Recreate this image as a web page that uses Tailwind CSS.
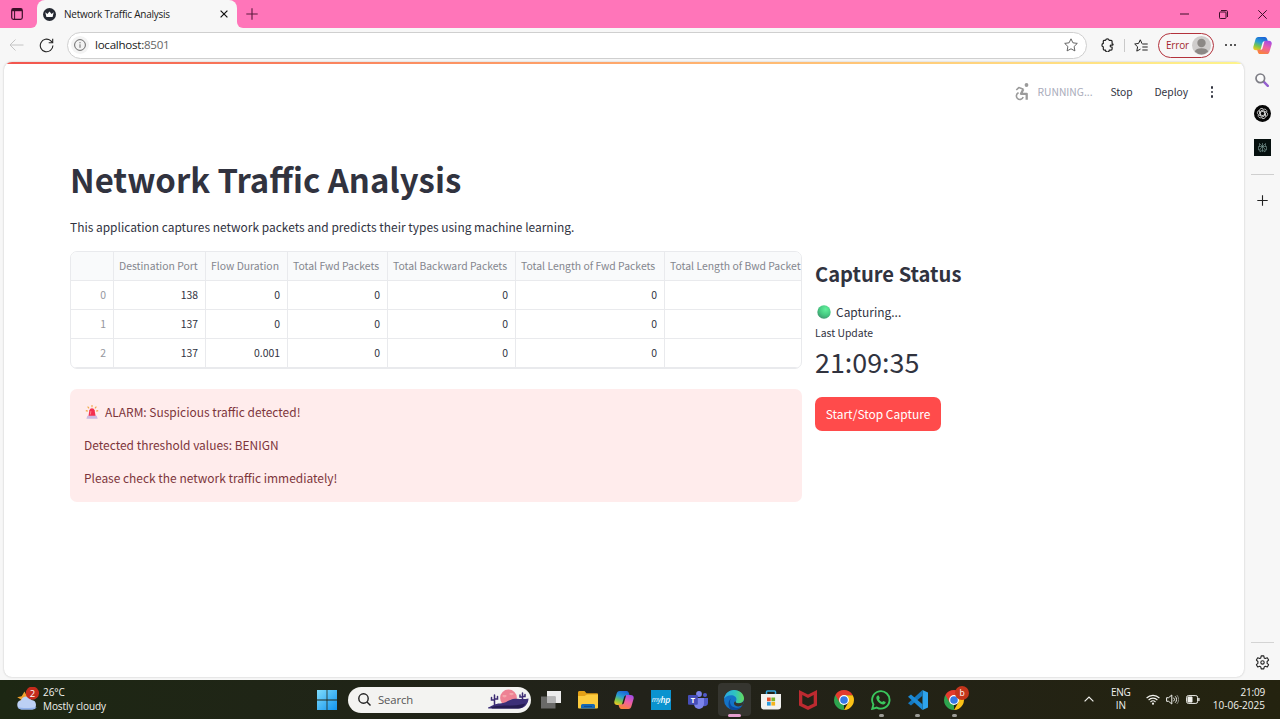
<!DOCTYPE html>
<html lang="en">
<head>
<meta charset="utf-8">
<title>Network Traffic Analysis</title>
<script src="https://cdn.jsdelivr.net/npm/@tailwindcss/browser@4"></script>
</head>
<body class="w-[1280px] h-[719px] overflow-hidden bg-[#f7f7f7] font-['Noto_Sans',sans-serif] text-[#1b1b1b]">
<svg width="0" height="0" class="absolute">
  <defs>
    <linearGradient id="cpL" x1=".6" y1="0" x2=".2" y2="1"><stop offset="0" stop-color="#1b66d8"/><stop offset=".4" stop-color="#2a9fd0"/><stop offset=".7" stop-color="#7cc64a"/><stop offset="1" stop-color="#f4c81e"/></linearGradient>
    <linearGradient id="cpR" x1=".8" y1="0" x2=".4" y2="1"><stop offset="0" stop-color="#a04be8"/><stop offset=".5" stop-color="#ee5fa5"/><stop offset="1" stop-color="#f9833c"/></linearGradient>
    <linearGradient id="win" x1="0" y1="0" x2="1" y2="1"><stop offset="0" stop-color="#7fdcfb"/><stop offset="1" stop-color="#1193ee"/></linearGradient>
    <linearGradient id="edgeA" x1="0" y1="0" x2="1" y2="0"><stop offset="0" stop-color="#2aa7e2"/><stop offset=".55" stop-color="#2fc3c0"/><stop offset="1" stop-color="#66dc5a"/></linearGradient>
    <radialGradient id="ball" cx=".62" cy=".3" r=".8"><stop offset="0" stop-color="#62f09c"/><stop offset=".55" stop-color="#47c982"/><stop offset="1" stop-color="#3f8f6c"/></radialGradient>
    <symbol id="copilot" viewBox="0 0 20 20">
      <path d="M5.500 1H12.500C14 1 14.500 2 15 3.500L15.600 5.500H12.500C11 5.500 10.300 6 10 7.200L7.800 15H3.500C1 15 0 13.500.3 11.500L2.500 4C3 2 4 1 5.500 1z" fill="url(#cpL)"/>
      <path d="M14.500 19H7.500C6 19 5.500 18 5 16.500L4.400 14.500H7.500C9 14.500 9.700 14 10 12.800L12.200 5H16.500C19 5 20 6.500 19.700 8.500L17.500 16C17 18 16 19 14.500 19z" fill="url(#cpR)"/>
    </symbol>
    <symbol id="chrome" viewBox="0 0 20 20">
      <path d="M10 10L1.340 5A10 10 0 0 0 10 20z" fill="#2da44e"/>
      <path d="M1.340 5L5.700 12.500 10 10V5.200H18.660L18.660 5A10 10 0 0 0 1.340 5z" fill="#e33b2e"/>
      <path d="M14.300 12.500L10 20A10 10 0 0 0 18.750 5.200H10z" fill="#fbc116"/>
      <circle cx="10" cy="10" r="4.900" fill="#fff"/><circle cx="10" cy="10" r="3.800" fill="#3578e5"/>
    </symbol>
  </defs>
</svg>
<div class="flex flex-col w-[1280px] h-[719px]">

  <!-- tab strip -->
  <header class="flex h-7 bg-[#ff75b9] shrink-0">
    <div class="w-[37px] flex items-center justify-end pr-[14px] bg-[#ff75b9] rounded-br-md relative z-10">
      <svg class="w-3 h-3" viewBox="0 0 12 12" fill="none" stroke="#3a1028"><rect x=".7" y=".7" width="10.600" height="10.600" rx="1.800" stroke-width="1.200"/><path d="M1 2h10" stroke-width="2.400"/><path d="M3.600 3v8" stroke-width="1"/></svg>
    </div>
    <div class="w-[200px] bg-[#f7f7f7] rounded-t-lg flex items-center pl-1.5 pr-[9px] shadow-[-8px_14px_0_0_#f7f7f7,8px_14px_0_0_#f7f7f7]">
      <svg class="w-[13px] h-[13px]" viewBox="0 0 13 13"><circle cx="6.500" cy="6.500" r="6.500" fill="#262a33"/><path d="M2.300 4.300l2.100 1.700L6.500 3.600 8.600 6l2.100-1.700L9.600 9H3.400z" fill="#fff"/></svg>
      <span class="ml-2 text-[10px] leading-[14px] whitespace-nowrap font-['Open_Sans',sans-serif] tracking-[-0.25px]">Network Traffic Analysis</span>
      <svg class="w-2 h-2 ml-auto" viewBox="0 0 8 8" stroke="#111" stroke-width="1.200"><path d="M.6.6l6.800 6.800M7.400.6L.6 7.400"/></svg>
    </div>
    <div class="flex-1 flex items-center pl-[9px] pr-2 bg-[#ff75b9] rounded-bl-md relative z-10">
      <svg class="w-3 h-3" viewBox="0 0 12 12" stroke="#5a1a3c" stroke-width="1.100"><path d="M6 .3v11.400M.3 6h11.400"/></svg>
      <div class="ml-auto flex items-center gap-[30px] pr-[5px]">
        <svg class="w-[9px] h-[9px]" viewBox="0 0 9 9" stroke="#3d1029"><path d="M0 4h9"/></svg>
        <svg class="w-[9px] h-[9px]" viewBox="0 0 9 9" fill="none" stroke="#3d1029"><rect x=".5" y="2" width="6.500" height="6.500" rx=".8"/><path d="M2 .5h5.200a1.300 1.300 0 0 1 1.300 1.300V7"/></svg>
        <svg class="w-[9px] h-[9px]" viewBox="0 0 9 9" stroke="#3d1029"><path d="M.3.3l8.400 8.400M8.700.3L.3 8.700"/></svg>
      </div>
    </div>
  </header>

  <div class="flex h-[652px] shrink-0">
    <div class="flex flex-col w-[1245px]">
      <!-- toolbar -->
      <div class="flex items-center h-[34px] pl-[9px] shrink-0">
        <svg class="w-[15px] h-3" viewBox="0 0 15 12" fill="none" stroke="#c4c4c4" stroke-width="1"><path d="M14.500 6H1M6.500.5L1 6l5.500 5.500"/></svg>
        <svg class="w-[15px] h-[15px] ml-[15px]" viewBox="0 0 15 15" fill="none" stroke="#222" stroke-width="1.100"><path d="M13.900 7.500a6.300 6.300 0 1 1-2.300-4.900l1.900 1.900"/><path d="M13.700.7v4h-4"/></svg>
        <div class="ml-[13px] w-[1020px] h-[27px] rounded-full border border-[#cfcfcf] bg-white flex items-center pl-[3px] pr-2">
          <div class="w-[18px] h-[18px] rounded-full bg-[#f3f3f3] flex items-center justify-center">
            <svg class="w-3 h-3" viewBox="0 0 12 12" fill="none" stroke="#6a6a6a"><circle cx="6" cy="6" r="5.400"/><path d="M6 5.300v3.500M6 3.100v1.200"/></svg>
          </div>
          <span class="ml-[6px] text-[11.600px] leading-4 font-['Open_Sans',sans-serif] tracking-[-0.27px] text-[#1b1b1b]">localhost:<span class="text-[#666]">8501</span></span>
          <svg class="w-[14px] h-[14px] ml-auto" viewBox="0 0 14 14" fill="none" stroke="#555" stroke-width=".9" stroke-linejoin="round"><path d="M7 .8l1.900 4 4.400.6-3.200 3.100.8 4.400L7 10.800l-3.900 2.100.8-4.400L.7 5.400l4.400-.6z"/></svg>
        </div>
        <svg class="w-[13px] h-[14px] ml-[14px]" viewBox="0 0 13 14" fill="none" stroke="#222" stroke-width="1.200" stroke-linejoin="round"><path d="M3 2.400h1.500a1.900 1.900 0 0 1 3.700 0h1.900a1 1 0 0 1 1 1v2a.5.5 0 0 0 .5.5.6.6 0 0 1 .5.6.6.6 0 0 1-.5.600h-1.700a1 1 0 0 0 0 1.900h1.200v2.100a1 1 0 0 1-1 1H8.300a1.900 1.900 0 0 1-3.800 0H3.300a1 1 0 0 1-1-1V8.900a1.800 1.800 0 0 1 0-3.500V3.200a.8.800 0 0 1 .7-.8z"/></svg>
        <div class="w-px h-[13px] bg-[#c9c9c9] ml-2.5"></div>
        <svg class="w-[14px] h-[13px] ml-[9px]" viewBox="0 0 14 13" fill="none" stroke="#222" stroke-width="1" stroke-linejoin="round"><path d="M8 4.700L6.300.8 4.600 4.400.7 5l2.900 2.800-.8 4.300 3.700-2M8.300 5h5.400M8.300 8h5.400M8.300 11h5.400"/></svg>
        <div class="ml-[10px] w-[56px] h-[25px] border border-[#b3323c] rounded-full flex items-center pl-[7px]">
          <span class="text-[10px] leading-[14px] text-[#a4262c] font-['Open_Sans',sans-serif] tracking-[-0.2px]">Error</span>
          <svg class="w-[19px] h-[19px] ml-auto mr-[2px]" viewBox="0 0 19 19"><circle cx="9.500" cy="9.500" r="9.500" fill="#cfcdcc"/><circle cx="9.500" cy="7" r="4.200" fill="#8c8986"/><path d="M2.800 15.400c1-2.300 3-3.200 6.700-3.200s5.700.9 6.700 3.200A9.500 9.500 0 0 1 9.500 18.400a9.500 9.500 0 0 1-6.700-3z" fill="#8c8986"/></svg>
        </div>
        <div class="ml-[11px] flex gap-[2.500px]"><i class="size-[2px] rounded-full bg-[#222]"></i><i class="size-[2px] rounded-full bg-[#222]"></i><i class="size-[2px] rounded-full bg-[#222]"></i></div>
      </div>

      <!-- page -->
      <main class="ml-1 w-[1240px] h-[615px] bg-white rounded-lg overflow-hidden shadow-[0_0_2px_#bbb] flex flex-col font-['Noto_Sans_CJK_SC',sans-serif] text-[#31333f]">
        <div class="h-[2px] shrink-0 bg-linear-to-r from-[#f2544e] to-[#fdf48c]"></div>
        <div class="h-[56px] shrink-0 flex items-center justify-end pr-[31px] text-[10.300px] leading-4">
          <svg class="w-[15px] h-[18px]" viewBox="0 0 15 18"><circle cx="12.500" cy="2" r="1.900" fill="#9b9b9b"/><g fill="none" stroke="#9b9b9b" stroke-linejoin="round"><path d="M2.300 7l2.500-2.400 4.700 1.700" stroke-width="1.600"/><path d="M9.300 6.300L7 10.800h5.700v6" stroke-width="2.300"/><path d="M4.600 9.700a3.500 3.500 0 1 0 4.600 4.400" stroke-width="1.600"/></g></svg>
          <span class="ml-[9px] w-[57px] text-[#a9abba] whitespace-nowrap">RUNNING...</span>
          <span class="ml-[16px] w-[24px]">Stop</span>
          <span class="ml-5 w-[35px]">Deploy</span>
          <div class="ml-[21px] flex flex-col gap-[2px]"><i class="size-[2.500px] rounded-full bg-[#31333f]"></i><i class="size-[2.500px] rounded-full bg-[#31333f]"></i><i class="size-[2.500px] rounded-full bg-[#31333f]"></i></div>
        </div>
        <div class="pl-[66px] pt-[37px] flex flex-col">
          <h1 class="text-[32.900px] leading-[44px] font-bold whitespace-nowrap">Network Traffic Analysis</h1>
          <p class="mt-[16px] text-[11.960px] leading-5 whitespace-nowrap">This application captures network packets and predicts their types using machine learning.</p>
          <div class="flex mt-[14px]">
            <section class="w-[732px]">
              <div class="h-[118px] border border-[#e9eaed] rounded-[7px] overflow-hidden grid grid-cols-[43px_92px_82px_100px_128px_149px_1fr] grid-rows-[29px_29px_29px_29px] text-[10.420px] leading-[28px] text-right whitespace-nowrap [&>*]:border-[#e9eaed] [&>*]:border-r [&>*]:border-b [&>*]:pr-[7px] [&>*]:pl-[5px]">
                <div class="bg-[#f9fafb]"></div>
                <div class="bg-[#f9fafb] text-[#84868e] text-left">Destination Port</div>
                <div class="bg-[#f9fafb] text-[#84868e] text-left">Flow Duration</div>
                <div class="bg-[#f9fafb] text-[#84868e] text-left">Total Fwd Packets</div>
                <div class="bg-[#f9fafb] text-[#84868e] text-left">Total Backward Packets</div>
                <div class="bg-[#f9fafb] text-[#84868e] text-left">Total Length of Fwd Packets</div>
                <div class="bg-[#f9fafb] text-[#84868e] text-left">Total Length of Bwd Packet</div>
                <div class="text-[#96979e]">0</div><div>138</div><div>0</div><div>0</div><div>0</div><div>0</div><div></div>
                <div class="text-[#96979e]">1</div><div>137</div><div>0</div><div>0</div><div>0</div><div>0</div><div></div>
                <div class="text-[#96979e]">2</div><div>137</div><div>0.001</div><div>0</div><div>0</div><div>0</div><div></div>
              </div>
              <div class="mt-[20px] h-[113px] rounded-[7px] bg-[#ffecec] pl-[14px] pt-[13px] flex flex-col gap-[13.200px] text-[11.960px] leading-5 text-[#7d353b]">
                <p class="flex items-center"><svg class="w-[14px] h-[14px] ml-[1px] mr-[6px]" viewBox="0 0 14 14"><path d="M7 0v2.200M2.600 1.600l1.500 1.800M11.400 1.600L9.900 3.400M.8 5.600l2 .5M13.200 5.600l-2 .5" stroke="#f0a848" stroke-width="1.100"/><path d="M3.500 11L4.400 5.300A2.700 2.700 0 0 1 9.600 5.300l1 5.700z" fill="#f3304f"/><path d="M5.400 9.500l.5-3.400" stroke="#ff7d8a" stroke-width="1"/><path d="M2.400 10.800h9.300l1 2.900H1.400z" fill="#cdb9e2"/></svg>ALARM: Suspicious traffic detected!</p>
                <p>Detected threshold values: BENIGN</p>
                <p>Please check the network traffic immediately!</p>
              </div>
            </section>
            <section class="ml-[13px] pt-[8px] whitespace-nowrap">
              <h2 class="text-[20.150px] leading-[30px] font-bold">Capture Status</h2>
              <p class="mt-[13px] flex items-center text-[11.960px] leading-5"><svg class="w-[14px] h-[14px] ml-[2px] mr-[5px]" viewBox="0 0 14 14"><circle cx="7" cy="7" r="6.700" fill="url(#ball)"/></svg>Capturing...</p>
              <p class="mt-[3px] text-[10.420px] leading-4">Last Update</p>
              <p class="mt-[2px] text-[26.850px] leading-[38px]">21:09:35</p>
              <button class="mt-[16px] w-[126px] h-[34px] rounded-[7px] bg-[#ff4b4b] text-white text-[11.960px] leading-5 block">Start/Stop Capture</button>
            </section>
          </div>
        </div>
      </main>
    </div>

    <!-- sidebar -->
    <aside class="w-[35px] flex flex-col items-center pt-[8px]">
      <svg class="w-[19px] h-[19px]"><use href="#copilot"/></svg>
      <svg class="w-[14px] h-[14px] mt-[18px] mr-[2px]" viewBox="0 0 14 14" fill="none"><path d="M8.400 8.400l4.400 4.400" stroke="#9460cf" stroke-width="2.400" stroke-linecap="round"/><circle cx="5.300" cy="5.300" r="4.300" stroke="#7d7d85" stroke-width="1.700" fill="#fbfbfb"/></svg>
      <svg class="w-[17px] h-[17px] mt-[18px]" viewBox="0 0 17 17" fill="none"><circle cx="8.500" cy="8.500" r="8.500" fill="#060606"/><g stroke="#e8e8e8" stroke-width=".75"><path id="petal" d="M6.500 10.800V6.200l3-1.800a2.300 2.300 0 0 1 3.300 2.600"/><use href="#petal" transform="rotate(60 8.500 8.500)"/><use href="#petal" transform="rotate(120 8.500 8.500)"/><use href="#petal" transform="rotate(180 8.500 8.500)"/><use href="#petal" transform="rotate(240 8.500 8.500)"/><use href="#petal" transform="rotate(300 8.500 8.500)"/></g></svg>
      <svg class="w-[17px] h-[17px] mt-[17px]" viewBox="0 0 17 17" fill="none"><path d="M0 0h17v17H0z" fill="#06100f"/><path d="M8.500 4v9M5.500 4.500l3 3 3-3v3M5.500 4.500v3M4.500 7.500h8v3.500h-1.500M4.500 7.500V11H6M8.500 7.500l-2.500 2.500v3l2.500-2 2.500 2v-3z" stroke="#7f9f9b" stroke-width=".6"/></svg>
      <div class="w-[23px] h-px bg-[#cfcfcf] mt-[18px]"></div>
      <svg class="w-[11px] h-[11px] mt-[20px]" viewBox="0 0 11 11" stroke="#222" stroke-width="1.100"><path d="M5.500.3v10.400M.3 5.500h10.400"/></svg>
      <div class="w-[23px] h-px bg-[#d4d4d4] mt-auto"></div>
      <svg class="w-[15px] h-[15px] mt-[12px] mb-[10px]" viewBox="0 0 15 15" fill="none" stroke="#222" stroke-width="1.100" stroke-linejoin="round"><path d="M6.200.9h2.600l.4 2 1.100.6 2-.7 1.300 2.300-1.500 1.400v1.800l1.500 1.400-1.300 2.300-2-.7-1.100.6-.4 2H6.200l-.4-2-1.100-.6-2 .7L1.400 9.700l1.500-1.400V6.500L1.400 5.100l1.300-2.300 2 .7 1.100-.6z"/><circle cx="7.500" cy="7.400" r="1.700"/></svg>
    </aside>
  </div>

  <!-- taskbar -->
  <footer class="h-[39px] shrink-0 bg-linear-to-r from-[#1d2713] via-[#22221a] to-[#24230f] flex items-center text-[#f2f2ee] text-[10px] leading-[13.500px] font-['Open_Sans',sans-serif] whitespace-nowrap">
    <div class="w-[316px] flex items-center pl-[16px]">
      <svg class="w-[25px] h-[25px]" viewBox="0 0 25 25"><path d="M8.500 4.500l1.600 3 3.400.4v8H3l2-3.300-3.800-2.400 4.500-1z" fill="#f0a12e"/><path d="M5.500 22.500a4.700 4.700 0 0 1-.4-9.300A5.600 5.600 0 0 1 15.500 13a4.800 4.800 0 0 1 .6 9.500z" fill="#bcd0f4"/><path d="M5.500 22.500a4.500 4.500 0 0 1-4-2.500c3 1.300 14 1.400 19.200 0a4.800 4.800 0 0 1-4.600 2.500z" fill="#8fb0ea"/><circle cx="16.400" cy="6.200" r="6.600" fill="#c42b1c"/><text x="16.400" y="9.800" font-size="9.500" fill="#fff" text-anchor="middle">2</text></svg>
      <div class="ml-[2px] tracking-[-0.08px]"><div>26°C</div><div>Mostly cloudy</div></div>
    </div>
    <svg class="w-5 h-5 ml-px" viewBox="0 0 20 20" fill="url(#win)"><path d="M0 0h9.600v9.600H0zM10.400 0H20v9.600h-9.600zM0 10.400h9.600V20H0zM10.400 10.400H20V20h-9.600z"/></svg>
    <div class="ml-[11px] w-[183px] h-[26px] rounded-full bg-[#f3f3f1] flex items-center pl-[10px] pr-[2px]">
      <svg class="w-[13px] h-[13px]" viewBox="0 0 13 13" fill="none" stroke="#222" stroke-width="1.400"><circle cx="5.500" cy="5.500" r="4.700"/><path d="M9 9l3.500 3.500"/></svg>
      <span class="ml-[7px] text-[11.300px] tracking-[-0.1px] text-[#555]">Search</span>
      <svg class="w-[41px] h-[21px] ml-auto" viewBox="0 0 41 21"><circle cx="20.500" cy="9" r="8.400" fill="#ee8294"/><path d="M15 6a2 1.400 0 1 0 3 0M22 4a2 1.300 0 1 0 3 0M22 10a2 1.300 0 1 0 4 0" fill="#f5a5ab"/><path d="M0 18.500c4-1.500 7-4 12-4 7 0 9-4.500 15-4.700 5-.2 8 .8 13.500-.3 0 5-4 10-10 10H2c-2 0-3-.5-2-1z" fill="#3c2f78"/><path d="M3 18.500c8-3.500 20 0 34.500-4-2 3-4 5-7.500 5H4z" fill="#241b50"/><path d="M6.500 16V6M3.500 8.500V11h3M9.500 7.500V10h-3M34.500 11V4M32 6v2h2.500M37 5.500V7.500h-2.500" stroke="#3c2b73" stroke-width="1.500" fill="none" stroke-linecap="round"/></svg>
    </div>
    <div class="flex items-center ml-[1.500px] [&>*]:w-[36.700px] [&>*]:h-[36px] [&>*]:flex [&>*]:items-center [&>*]:justify-center [&>*]:relative">
      <div><svg class="w-5 h-[18px]" viewBox="0 0 20 18"><path d="M6 0h14v12H6z" fill="#ececec"/><path d="M0 5.500h14.500V17.500H0z" fill="#777" fill-opacity=".85"/><path d="M6 5.500h8.500V12H6z" fill="#b4b4b4"/></svg></div>
      <div><svg class="w-5 h-[18px]" viewBox="0 0 20 18"><path d="M0 1.500C0 .6.6 0 1.500 0h5l2 2.200H19a1 1 0 0 1 1 1V16H0z" fill="#e3a016"/><path d="M0 5h6.500L9 3.500h11V16.500a1 1 0 0 1-1 1H1a1 1 0 0 1-1-1z" fill="#fccb3e"/><path d="M3 17.500v-3a1.500 1.500 0 0 1 1.500-1.500h11a1.500 1.500 0 0 1 1.500 1.500v3z" fill="#1768b5"/><path d="M6 15.400h8" stroke="#0d4b8c"/></svg></div>
      <div><svg class="w-5 h-5"><use href="#copilot"/></svg></div>
      <div><span class="size-5 bg-[#0a93cf] text-white text-[7px] italic flex items-center justify-center tracking-[-0.3px]">my<b class="text-[8.500px] font-semibold">hp</b></span></div>
      <div><svg class="w-5 h-[18px]" viewBox="0 0 20 18"><circle cx="17" cy="4" r="2" fill="#5059c9"/><path d="M13 7h7v5a3.200 3.200 0 0 1-5 2.600z" fill="#5059c9"/><circle cx="11" cy="3" r="2.900" fill="#7b83eb"/><path d="M6 7h10v6a5 5 0 0 1-10 0z" fill="#7b83eb"/><rect y="4" width="9.800" height="9.800" rx="1" fill="#464eb8"/><text x="4.900" y="11.700" font-size="7.500" font-weight="700" fill="#fff" text-anchor="middle">T</text></svg></div>
      <div class="before:content-[''] before:absolute before:left-[2px] before:top-[1px] before:w-[33px] before:h-[33px] before:rounded before:bg-[#35352f]"><svg class="w-5 h-5 relative" viewBox="0 0 20 20"><circle cx="10" cy="10" r="10" fill="#1473c8"/><path d="M.1 9C.7 3.800 4.900 0 10 0c5.600 0 10 4 10 8.300 0 3-2.300 5-5.300 5-2 0-3.200-.8-3.200-1.500s1-1 1-2.600c0-2-2.300-3.900-5.300-3.900C4 5.300 1.200 6.800.1 9z" fill="url(#edgeA)"/><path d="M7.600 7.900c-3 2.700-1.800 8.600 3.400 9.700 3 .6 5.600-.3 7.400-2.200A10 10 0 0 1 7.200 19.600C4 18 3 11 7.600 7.900z" fill="#0c4a9c"/><path d="M18.700 15A10 10 0 0 0 20 10.500c-1.500 2.400-4 3-6 2.700-2.500-.4-3-1.400-2.100-2.300-2 .6-2.600 3-.6 4.600 2 1.600 5.400 1 7.400-.5z" fill="#35352f"/></svg><i class="absolute bottom-[1px] left-[12px] w-[13px] h-[3px] rounded-full bg-[#e59fce]"></i></div>
      <div><svg class="w-5 h-5" viewBox="0 0 20 20"><path d="M5.500 5V2a1 1 0 0 1 1-1h7a1 1 0 0 1 1 1v3" fill="none" stroke="#35a7e0" stroke-width="1.500"/><path d="M0 4h20v12.500a3 3 0 0 1-3 3H3a3 3 0 0 1-3-3z" fill="#f2f2f0"/><path d="M6 7.500h3.700v3.700H6z" fill="#e8502c"/><path d="M10.400 7.500h3.700v3.700h-3.700z" fill="#7ab52a"/><path d="M6 11.900h3.700v3.700H6z" fill="#2a9be0"/><path d="M10.400 11.900h3.700v3.700h-3.700z" fill="#f5b41d"/></svg></div>
      <div><svg class="w-[18px] h-5" viewBox="0 0 18 20"><path d="M0 0l9 4.500L18 0v15.500L9 20l-9-4.500zM3.300 5v8.500L9 16.300l5.700-2.800V5L9 7.900z" fill="#bd2a30" fill-rule="evenodd"/></svg></div>
      <div><svg class="w-5 h-5"><use href="#chrome"/></svg></div>
      <div><svg class="w-5 h-5" viewBox="0 0 20 20" fill="none"><path d="M1.200 18.900l1.200-4.500A8.700 8.700 0 1 1 5.800 17.600z" stroke="#3ac65c" stroke-width="1.900"/><path d="M6.700 5.500h1l1.100 2.400-.8 1.300c.8 1.400 1.700 2.200 3.100 2.900l1.200-1.200 2.400 1.200c0 1.700-1.300 2.500-2.600 2.400-3.300-.4-6.400-3.600-6.800-6.500 0-1.100.6-2.100 1.400-2.500z" fill="#3ac65c"/></svg><i class="absolute bottom-[1px] left-[16px] w-[5px] h-[3px] rounded-full bg-[#9b9b95]"></i></div>
      <div><svg class="w-5 h-5" viewBox="0 0 20 20"><path d="M14.500 0L20 2.500v15L14.500 20z" fill="#2ea3ec"/><path d="M14.500 0v5.700L3 15.400 0 13.200z" fill="#1478c0"/><path d="M0 6.800l3-2.200 11.500 9.700V20z" fill="#1c8ad6"/></svg><i class="absolute bottom-[1px] left-[16px] w-[5px] h-[3px] rounded-full bg-[#9b9b95]"></i></div>
      <div><svg class="w-5 h-5"><use href="#chrome"/></svg><span class="absolute left-[19px] top-[4px] size-[14px] rounded-full bg-[#c4351c] text-[8.500px] leading-[13px] text-center text-white">b</span><i class="absolute bottom-[1px] left-[16px] w-[5px] h-[3px] rounded-full bg-[#9b9b95]"></i></div>
    </div>
    <div class="ml-auto flex items-center pr-[15px] pb-px">
      <svg class="w-[10px] h-[6px]" viewBox="0 0 10 6" fill="none" stroke="#f2f2ee" stroke-width="1.200"><path d="M.6 5.400L5 1l4.400 4.400"/></svg>
      <div class="ml-[17px] w-[20px] flex flex-col items-center tracking-[-0.2px]"><span>ENG</span><span>IN</span></div>
      <svg class="w-[14px] h-[11px] ml-[15px]" viewBox="0 0 14 11" fill="none" stroke="#f2f2ee" stroke-width="1.100"><path d="M.6 4a9 9 0 0 1 12.800 0M2.600 6a6.200 6.200 0 0 1 8.800 0M4.500 8a3.600 3.600 0 0 1 5 0"/><circle cx="7" cy="9.700" r="1.100" fill="#f2f2ee" stroke="none"/></svg>
      <svg class="w-[13px] h-[11px] ml-[6px]" viewBox="0 0 13 11" fill="none" stroke="#f2f2ee" stroke-width="1"><path d="M.6 3.700h2L5.800 1v9L2.600 7.300h-2zM7.600 3.700a2.500 2.500 0 0 1 0 3.600M9.200 2.300a4.500 4.500 0 0 1 0 6.400"/><path d="M10.800 1a6.500 6.500 0 0 1 0 9" stroke="#8d8d86"/></svg>
      <svg class="w-[14px] h-[9px] ml-[7px]" viewBox="0 0 14 9" fill="none" stroke="#f2f2ee" stroke-width="1"><rect x=".6" y=".6" width="11" height="7.800" rx="1.800"/><path d="M2 2h4v5H2z" fill="#f2f2ee"/><path d="M12.900 3v3" stroke-width="1.300"/></svg>
      <div class="ml-[13px] flex flex-col items-end"><span class="tracking-[-0.2px]">21:09</span><span>10-06-2025</span></div>
    </div>
  </footer>
</div>
</body>
</html>
